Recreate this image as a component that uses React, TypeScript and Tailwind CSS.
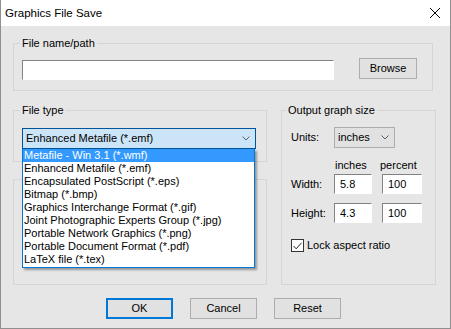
import React from 'react';

const fileTypes = [
  'Metafile - Win 3.1 (*.wmf)',
  'Enhanced Metafile (*.emf)',
  'Encapsulated PostScript (*.eps)',
  'Bitmap (*.bmp)',
  'Graphics Interchange Format (*.gif)',
  'Joint Photographic Experts Group (*.jpg)',
  'Portable Network Graphics (*.png)',
  'Portable Document Format (*.pdf)',
  'LaTeX file (*.tex)',
];

const Chevron: React.FC = () => (
  <svg width="8" height="5" viewBox="0 0 8 5" className="shrink-0">
    <path d="M0.5 0.5 L4 4 L7.5 0.5" fill="none" stroke="#606060" strokeWidth="1" />
  </svg>
);

// sunken edit box, dark top/left edge like the win32 control
const EditBox: React.FC<{ value: string; className: string }> = ({ value, className }) => (
  <input
    type="text"
    readOnly
    defaultValue={value}
    className={`h-[20px] bg-white border border-t-[#828282] border-l-[#828282] border-r-white border-b-white pl-[5px] outline-none ${className}`}
  />
);

const Button: React.FC<{ label: string; primary?: boolean; className?: string }> = ({ label, primary, className = '' }) => (
  <button
    className={`h-[21px] bg-[#e1e1e1] text-black flex items-center justify-center ${
      primary ? 'border-2 border-[#0078d7]' : 'border border-[#adadad]'
    } ${className}`}
  >
    {label}
  </button>
);

export default function App() {
  return (
    <div className="w-[451px] h-[329px] bg-[#e6e6e6] border-x border-b border-[#8f8f8f] flex flex-col text-[11px] leading-[15px] text-black font-['Liberation_Sans',Arial,sans-serif]">
      {/* title bar */}
      <div className="h-[26px] bg-white flex items-center justify-between pl-[4px] pr-[10px] shrink-0">
        <span className="text-[11.5px]">Graphics File Save</span>
        <svg width="10" height="10" viewBox="0 0 10 10">
          <path d="M0 0 L10 10 M10 0 L0 10" stroke="#000" strokeWidth="1" />
        </svg>
      </div>

      <div className="flex-1 flex flex-col px-[12px]">
        {/* file name */}
        <fieldset className="mt-[10px] w-[420px] border border-[#d5d5d5] pl-[8px] pt-[7px] pb-[10px]">
          <legend className="ml-[-2px] px-[2px]">File name/path</legend>
          <div className="flex">
            <EditBox value="" className="mt-[2px] w-[312px]" />
            <Button label="Browse" className="ml-[25px] w-[58px]" />
          </div>
        </fieldset>

        <div className="mt-[12px] h-[182px] flex">
          {/* left column */}
          <div className="w-[254px] flex flex-col">
            <fieldset className="border border-[#d5d5d5] pl-[8px] pt-[10px] pb-[12px]">
              <legend className="ml-[-2px] px-[2px]">File type</legend>
              <div className="relative w-[234px]">
                <div className="h-[21px] bg-[#cce4f7] border border-[#005499] flex items-center justify-between pl-[3px] pr-[5px]">
                  <span>Enhanced Metafile (*.emf)</span>
                  <Chevron />
                </div>
                <ul className="absolute z-10 left-0 top-[21px] w-[233px] bg-white border-x border-b border-[#0078d7] pb-[1px] shadow-[2px_2px_2px_rgba(0,0,0,0.35)]">
                  {fileTypes.map((t, i) => (
                    <li
                      key={t}
                      className={`h-[13px] leading-[13px] pl-[1px] whitespace-nowrap ${
                        i === 0 ? 'bg-[#3399ff] text-white' : ''
                      }`}
                    >
                      {t}
                    </li>
                  ))}
                </ul>
              </div>
            </fieldset>
            <div className="mt-[17px] flex-1 border border-[#d5d5d5]" />
          </div>

          {/* output graph size */}
          <fieldset className="ml-[14px] w-[155px] border border-[#d5d5d5] pl-[9px] pt-[9px]">
            <legend className="ml-[-5px] px-[2px]">Output graph size</legend>
            <div className="flex items-center h-[21px]">
              <span className="w-[43px]">Units:</span>
              <div className="w-[61px] h-[21px] bg-[#e1e1e1] border border-[#adadad] flex items-center justify-between pl-[3px] pr-[5px]">
                <span>inches</span>
                <Chevron />
              </div>
            </div>
            <div className="mt-[10px] flex h-[15px]">
              <span className="ml-[44px] w-[45px]">inches</span>
              <span>percent</span>
            </div>
            <div className="mt-[1px] flex items-center">
              <span className="w-[43px]">Width:</span>
              <EditBox value="5.8" className="w-[38px]" />
              <EditBox value="100" className="ml-[10px] w-[40px]" />
            </div>
            <div className="mt-[9px] flex items-center">
              <span className="w-[43px]">Height:</span>
              <EditBox value="4.3" className="w-[38px]" />
              <EditBox value="100" className="ml-[10px] w-[40px]" />
            </div>
            <label className="mt-[15px] flex items-center">
              <span className="w-[13px] h-[13px] bg-white border border-[#333] flex items-center justify-center">
                <svg width="9" height="8" viewBox="0 0 9 8">
                  <path d="M0.5 4 L3.2 6.8 L8.5 0.8" fill="none" stroke="#222" strokeWidth="1" />
                </svg>
              </span>
              <span className="ml-[3px]">Lock aspect ratio</span>
            </label>
          </fieldset>
        </div>

        {/* dialog buttons */}
        <div className="mt-[13px] ml-[93px] flex gap-[17px]">
          <Button label="OK" primary className="w-[67px]" />
          <Button label="Cancel" className="w-[67px]" />
          <Button label="Reset" className="w-[67px]" />
        </div>
      </div>
    </div>
  );
}
